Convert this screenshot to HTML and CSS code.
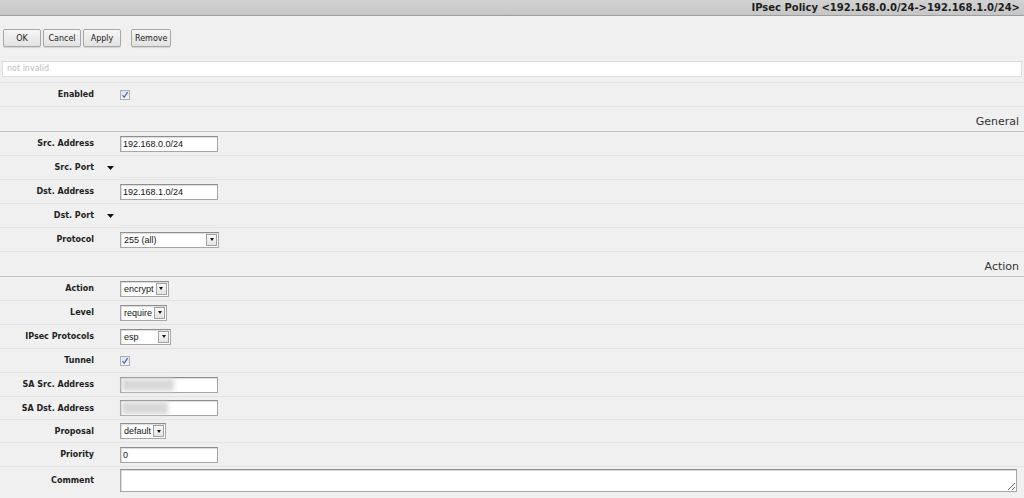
FILE: index.html
```html
<!DOCTYPE html>
<html lang="en">
<head>
  <meta charset="UTF-8" />
  <title>IPsec Policy</title>
  <link rel="stylesheet" href="styles.css">
</head>
<body>

  <div class="titlebar">IPsec Policy &lt;192.168.0.0/24-&gt;192.168.1.0/24&gt;</div>

  <div class="toolbar">
    <button>OK</button>
    <button>Cancel</button>
    <button>Apply</button>
    <button class="apart">Remove</button>
  </div>

  <div class="status">not invalid</div>

  <div class="form">
    <div class="row">
      <label>Enabled</label><span class="toggle"></span>
      <div class="field"><span class="check"><svg width="8" height="8" viewBox="0 0 8 8"><path d="M1.5 4.2 L3.2 6.3 L6.6 1.2" fill="none" stroke="#4b63a6" stroke-width="1.2"/></svg></span></div>
    </div>

    <div class="head">General</div>

    <div class="row">
      <label>Src. Address</label><span class="toggle"></span>
      <div class="field"><input class="text" type="text" value="192.168.0.0/24"></div>
    </div>
    <div class="row">
      <label>Src. Port</label><span class="toggle"><svg width="7" height="4" viewBox="0 0 7 4"><path d="M0 0 H7 L3.5 4 Z" fill="#111"/></svg></span>
      <div class="field"><span class="stub"></span></div>
    </div>
    <div class="row">
      <label>Dst. Address</label><span class="toggle"></span>
      <div class="field"><input class="text" type="text" value="192.168.1.0/24"></div>
    </div>
    <div class="row">
      <label>Dst. Port</label><span class="toggle"><svg width="7" height="4" viewBox="0 0 7 4"><path d="M0 0 H7 L3.5 4 Z" fill="#111"/></svg></span>
      <div class="field"><span class="stub"></span></div>
    </div>
    <div class="row">
      <label>Protocol</label><span class="toggle"></span>
      <div class="field"><div class="select wide"><span class="val">255 (all)</span><span class="drop"></span></div></div>
    </div>

    <div class="head">Action</div>

    <div class="row">
      <label>Action</label><span class="toggle"></span>
      <div class="field"><div class="select"><span class="val">encrypt</span><span class="drop"></span></div></div>
    </div>
    <div class="row">
      <label>Level</label><span class="toggle"></span>
      <div class="field"><div class="select"><span class="val">require</span><span class="drop"></span></div></div>
    </div>
    <div class="row">
      <label>IPsec Protocols</label><span class="toggle"></span>
      <div class="field"><div class="select mid"><span class="val">esp</span><span class="drop"></span></div></div>
    </div>
    <div class="row">
      <label>Tunnel</label><span class="toggle"></span>
      <div class="field"><span class="check"><svg width="8" height="8" viewBox="0 0 8 8"><path d="M1.5 4.2 L3.2 6.3 L6.6 1.2" fill="none" stroke="#4b63a6" stroke-width="1.2"/></svg></span></div>
    </div>
    <div class="row">
      <label>SA Src. Address</label><span class="toggle"></span>
      <div class="field"><span class="hidden"><input class="text" type="text" value=""><span class="blur"></span></span></div>
    </div>
    <div class="row tight">
      <label>SA Dst. Address</label><span class="toggle"></span>
      <div class="field"><span class="hidden"><input class="text" type="text" value=""><span class="blur short"></span></span></div>
    </div>
    <div class="row tight">
      <label>Proposal</label><span class="toggle"></span>
      <div class="field"><div class="select"><span class="val">default</span><span class="drop"></span></div></div>
    </div>
    <div class="row">
      <label>Priority</label><span class="toggle"></span>
      <div class="field"><input class="text" type="text" value="0"></div>
    </div>
    <div class="row last">
      <label>Comment</label><span class="toggle"></span>
      <div class="field"><textarea class="comment"></textarea></div>
    </div>
  </div>

</body>
</html>
```

FILE: styles.css
```css
body {
  margin: 0;
  background-color: #f0f0f0;
  color: #222;
  font-family: "DejaVu Sans", Verdana, sans-serif;
  font-size: 8px;
}
.titlebar {
  height: 15px;
  line-height: 15px;
  background: linear-gradient(#d2d2d2, #c6c6c6);
  border-bottom: 1px solid #9c9c9c;
  text-align: right;
  padding-right: 4px;
  font-size: 10px;
  font-weight: bold;
  color: #1e1e1e;
}
.toolbar {
  display: flex;
  gap: 2px;
  padding: 13px 0 0 3px;
  height: 18px;
}
.toolbar button {
  height: 18px;
  min-width: 38px;
  padding: 0 3px;
  font-family: "DejaVu Sans", Verdana, sans-serif;
  font-size: 8px;
  color: #222;
  background: linear-gradient(#f6f6f6, #e2e2e2);
  border: 1px solid #a8a8a8;
  border-radius: 2px;
  box-shadow: 0 1px 1px rgba(0, 0, 0, 0.12);
}
.toolbar .apart {
  margin-left: 8px;
}
.status {
  margin: 14px 2px 0 2px;
  height: 14px;
  line-height: 14px;
  background: #fff;
  border: 1px solid #dcdcdc;
  padding-left: 4px;
  color: #bcbcbc;
}
.form {
  margin-top: 5px;
  border-top: 1px solid #e3e3e3;
}
.row {
  display: grid;
  grid-template-columns: 94px 26px 1fr;
  align-items: center;
  height: 23px;
  border-bottom: 1px solid #e3e3e3;
}
.row.tight {
  height: 22px;
}
.row label {
  text-align: right;
  font-weight: bold;
  color: #222;
}
.toggle {
  display: flex;
  padding-left: 13px;
}
.field {
  display: flex;
  align-items: center;
  padding-right: 7px;
}
.head {
  height: 24px;
  line-height: 30px;
  border-bottom: 1px solid #c4c4c4;
  text-align: right;
  padding-right: 5px;
  font-size: 11px;
  color: #333;
}
.text {
  box-sizing: border-box;
  width: 98px;
  height: 16px;
  margin: 0;
  padding: 0 2px;
  border: 1px solid #a6a6a6;
  border-top-color: #8e8e8e;
  box-shadow: inset 1px 1px 1px #dcdcdc;
  background: #fff;
  font-family: "Liberation Sans", Arial, sans-serif;
  font-size: 9px;
  color: #111;
}
.check {
  box-sizing: border-box;
  width: 10px;
  height: 10px;
  border: 1px solid #a9afbd;
  background: linear-gradient(#dfe3ea, #f4f5f8);
  display: flex;
  align-items: center;
  justify-content: center;
}
.stub {
  width: 96px;
  height: 1px;
  background: #e6e6e6;
  margin-top: 19px;
}
.select {
  box-sizing: border-box;
  height: 16px;
  display: inline-flex;
  align-items: center;
  justify-content: space-between;
  gap: 2px;
  padding: 0 1px 0 3px;
  border: 1px solid #a6a6a6;
  border-top-color: #8e8e8e;
  box-shadow: inset 1px 1px 1px #dcdcdc;
  background: #fff;
  font-family: "Liberation Sans", Arial, sans-serif;
  font-size: 9px;
  color: #111;
}
.select.mid {
  width: 51px;
}
.select.wide {
  width: 99px;
}
.drop {
  box-sizing: border-box;
  width: 11px;
  height: 12px;
  border: 1px solid #a0a0a0;
  background: linear-gradient(#f8f8f8, #e4e4e4);
  display: flex;
  align-items: center;
  justify-content: center;
}
.drop::after {
  content: "";
  border-left: 2.5px solid transparent;
  border-right: 2.5px solid transparent;
  border-top: 3px solid #111;
}
.hidden {
  position: relative;
  display: inline-block;
}
.blur {
  position: absolute;
  left: 2px;
  top: 2px;
  width: 52px;
  height: 12px;
  background: #d8d8d8;
  filter: blur(2px);
}
.blur.short {
  width: 46px;
}
.row.last {
  height: 31px;
  align-items: start;
  border-bottom: none;
}
.row.last label {
  padding-top: 9px;
}
.row.last .field {
  padding-top: 2px;
}
.comment {
  box-sizing: border-box;
  width: 100%;
  height: 23px;
  margin: 0;
  border: 1px solid #a6a6a6;
  border-top-color: #8e8e8e;
  box-shadow: inset 1px 1px 1px #dcdcdc;
  background: #fff;
  font-family: "Liberation Sans", Arial, sans-serif;
  font-size: 9px;
}
```
